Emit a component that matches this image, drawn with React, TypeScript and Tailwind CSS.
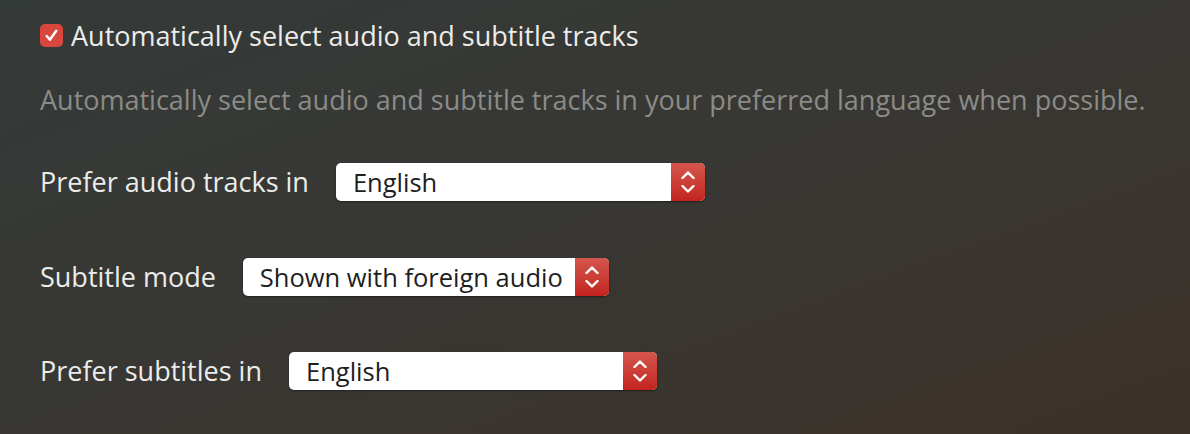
const Stepper = () => (
  <div className="flex h-full w-[34px] flex-col items-center justify-center gap-[6px] rounded-r-[5px] bg-gradient-to-b from-[#d4554d] to-[#c3221e]">
    <svg viewBox="0 0 14 8" className="h-[8px] w-[14px]" fill="none" stroke="white" strokeWidth={2.4} strokeLinecap="round" strokeLinejoin="round">
      <path d="M1.5 7l5.5-5.5 5.5 5.5" />
    </svg>
    <svg viewBox="0 0 14 8" className="h-[8px] w-[14px]" fill="none" stroke="white" strokeWidth={2.4} strokeLinecap="round" strokeLinejoin="round">
      <path d="M1.5 1l5.5 5.5 5.5-5.5" />
    </svg>
  </div>
);

const Select = ({ value, width }: { value: string; width: string }) => (
  <div className={`flex h-[38px] items-center rounded-[5px] bg-white shadow-[0_1px_2px_rgba(0,0,0,0.4)] ${width}`}>
    <span className="flex-1 truncate pl-[17px] text-[25.5px] leading-[38px] text-[#1e1e1e]">{value}</span>
    <Stepper />
  </div>
);

const Row = ({ label, value, width, className }: { label: string; value: string; width: string; className: string }) => (
  <div className={`flex items-center gap-[27px] ${className}`}>
    <span className="text-[27px] leading-[38px] text-[#ececea]">{label}</span>
    <Select value={value} width={width} />
  </div>
);

export default function App() {
  return (
    <div
      className="h-[434px] w-[1190px] overflow-hidden bg-gradient-to-br from-[#343a38] via-[#383733] to-[#3c3129] pl-[40px] pt-[24px]"
      style={{ fontFamily: '"Open Sans", sans-serif' }}
    >
      <label className="flex h-[23px] items-center gap-[8px]">
        <span className="flex h-[23px] w-[23px] shrink-0 items-center justify-center rounded-[5px] bg-[#d8463e]">
          <svg viewBox="0 0 16 16" className="h-[17px] w-[17px]" fill="none" stroke="white" strokeWidth={2.3} strokeLinecap="round" strokeLinejoin="round">
            <path d="M3.5 8.5l3 3.5 6-8.5" />
          </svg>
        </span>
        <span className="text-[27px] leading-[23px] text-[#ececea]">Automatically select audio and subtitle tracks</span>
      </label>
      <p className="mt-[38px] h-[30px] whitespace-nowrap text-[27px] leading-[30px] text-[#8b8b88]">
        Automatically select audio and subtitle tracks in your preferred language when possible.
      </p>
      <Row label="Prefer audio tracks in" value="English" width="w-[369px]" className="mt-[48px]" />
      <Row label="Subtitle mode" value="Shown with foreign audio" width="w-[366px]" className="mt-[57px]" />
      <Row label="Prefer subtitles in" value="English" width="w-[368px]" className="mt-[56px]" />
    </div>
  );
}
